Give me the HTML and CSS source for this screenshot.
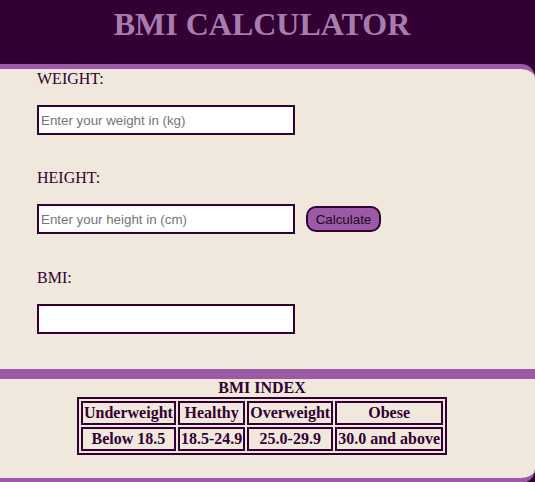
FILE: index.html
```html
<!DOCTYPE html>
<html>
<head>
<meta charset="utf-8">
<title>BMI Calculator</title>
<link rel="stylesheet" href="styles.css">
</head>
<body>
<header class="top">
  <h1 class="title">BMI CALCULATOR</h1>
</header>
<form class="calc">
  <label class="lbl" for="w">WEIGHT:</label>
  <input class="field gap-big" id="w" type="text" placeholder="Enter your weight in (kg)">
  <label class="lbl" for="h">HEIGHT:</label>
  <div class="row gap-big2">
    <input class="field" id="h" type="text" placeholder="Enter your height in (cm)">
    <button class="btn" type="button">Calculate</button>
  </div>
  <label class="lbl" for="b">BMI:</label>
  <input class="field" id="b" type="text">
</form>
<section class="index">
  <div class="cap">BMI INDEX</div>
  <table class="tbl">
    <tr><th>Underweight</th><th>Healthy</th><th>Overweight</th><th>Obese</th></tr>
    <tr><th>Below 18.5</th><th>18.5-24.9</th><th>25.0-29.9</th><th>30.0 and above</th></tr>
  </table>
</section>
</body>
</html>
```

FILE: styles.css
```css
html, body {
  margin: 0;
  padding: 0;
}
body {
  background: #330033;
  font-family: "Liberation Serif", "Times New Roman", serif;
  color: #330033;
}
.top {
  height: 64px;
  box-sizing: border-box;
  padding: 6px 11px 0 0;
  background: #330033;
}
.title {
  margin: 0;
  font-size: 32px;
  line-height: 36px;
  font-weight: bold;
  text-align: center;
  color: #a77db0;
}
.calc {
  display: flex;
  flex-direction: column;
  align-items: flex-start;
  margin: 0;
  padding: 1px 0 35px 37px;
  background: #f0e8dc;
  border-top: 5px solid #9b59a6;
  border-bottom: 5px solid #9b59a6;
  border-top-right-radius: 14px;
}
.lbl {
  display: block;
  font-size: 16px;
  line-height: 18px;
  margin-bottom: 17px;
}
.field {
  box-sizing: border-box;
  width: 258px;
  height: 30px;
  margin: 0;
  padding: 1px 2px;
  border: 2px solid #330033;
  border-radius: 0;
  background: #fff;
  font-family: "Liberation Sans", Arial, sans-serif;
  font-size: 13.33px;
  color: #000;
  outline: none;
}
.field::placeholder {
  color: #757575;
}
.gap-big {
  margin-bottom: 34px;
}
.row {
  display: flex;
  align-items: center;
  gap: 11px;
}
.gap-big2 {
  margin-bottom: 35px;
}
.btn {
  box-sizing: border-box;
  width: 75px;
  height: 26px;
  padding: 0;
  border: 2px solid #330033;
  border-radius: 10px;
  background: #9b59a6;
  color: #1a0a1a;
  font-family: "Liberation Sans", Arial, sans-serif;
  font-size: 13.33px;
}
.index {
  background: #f0e8dc;
  border-top: 5px solid #9b59a6;
  border-bottom: 5px solid #9b59a6;
  border-bottom-right-radius: 14px;
  padding: 0 11px 23px 0;
  text-align: center;
}
.cap {
  font-weight: bold;
  font-size: 16px;
  line-height: 18px;
}
.tbl {
  margin: 0 auto;
  border: 2px solid #330033;
  border-spacing: 2px;
}
.tbl th {
  border: 2px solid #330033;
  padding: 1px;
  font-size: 16px;
  line-height: 18px;
  font-weight: bold;
  color: #330033;
}
```
